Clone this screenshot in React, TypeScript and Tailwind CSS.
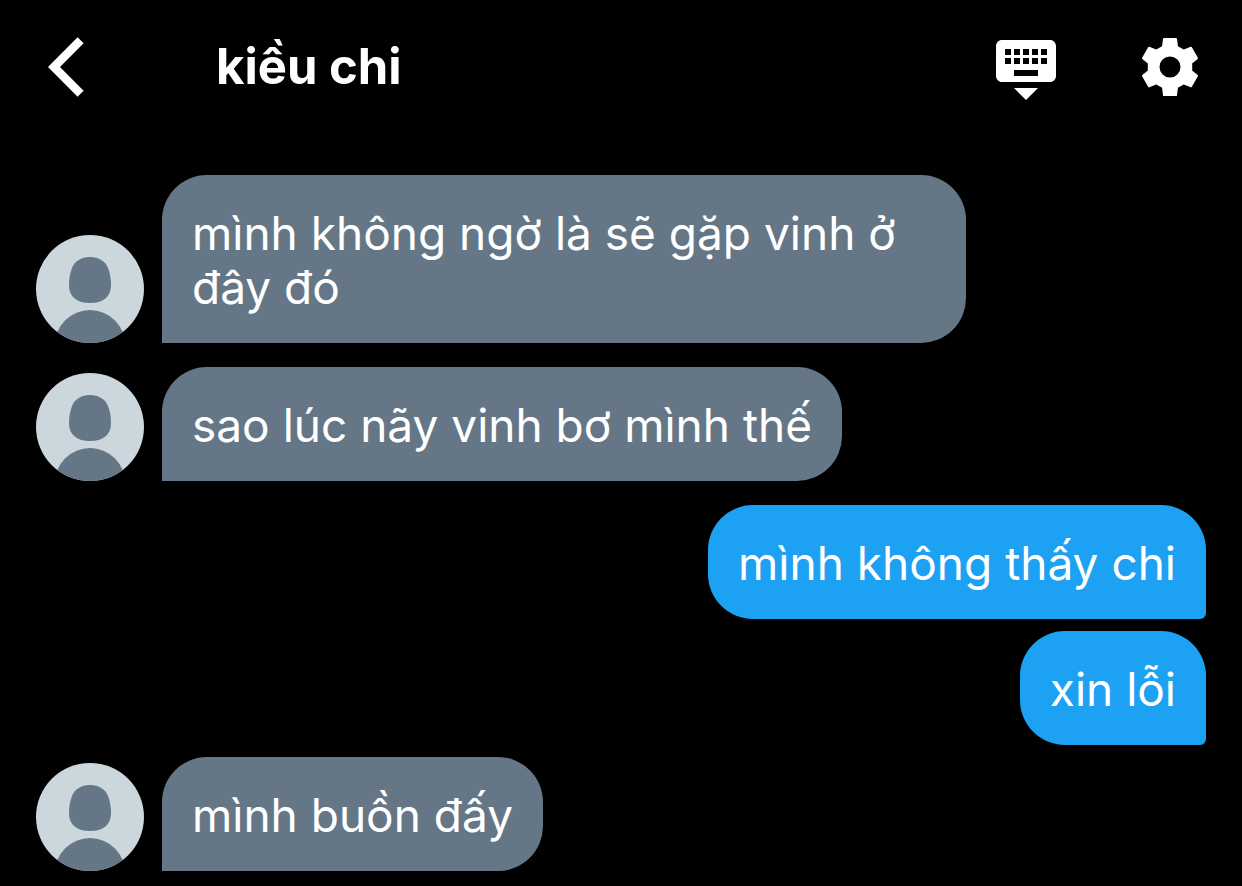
import clsx from "clsx";
import { MdKeyboardHide } from "react-icons/md";

type Message = {
  id: number;
  text: string;
  mine: boolean;
  // extra space above the bubble
  spaced: boolean;
};

const messages: Message[] = [
  { id: 1, text: "mình không ngờ là sẽ gặp vinh ở đây đó", mine: false, spaced: false },
  { id: 2, text: "sao lúc nãy vinh bơ mình thế", mine: false, spaced: true },
  { id: 3, text: "mình không thấy chi", mine: true, spaced: true },
  { id: 4, text: "xin lỗi", mine: true, spaced: false },
  { id: 5, text: "mình buồn đấy", mine: false, spaced: false },
];

function BackIcon() {
  return (
    <svg viewBox="0 0 72 72" className="size-18" fill="currentColor">
      <path d="M29.6 6.2 35.6 12.2 12 36 35.6 59.8 29.6 65.8 0 36z" />
    </svg>
  );
}

function GearIcon() {
  return (
    <svg
      viewBox="0 0 72 72"
      className="size-18"
      fill="currentColor"
      fillRule="evenodd"
      stroke="currentColor"
      strokeWidth="2"
      strokeLinejoin="round"
    >
      <path d="M30 8H42L43 15.8 49.6 19.6 57 16.8 63 27.2 57.2 32V40L63 44.8 57 55.2 49.6 52.4 43 56.2 42 64H30L29 56.2 22.4 52.4 15 55.2 9 44.8 14.8 40V32L9 27.2 15 16.8 22.4 19.6 29 15.8ZM36 24.5a11.5 11.5 0 1 0 0 23a11.5 11.5 0 1 0 0-23Z" />
    </svg>
  );
}

function Avatar() {
  return (
    <svg viewBox="0 0 108 108" className="size-27 shrink-0 rounded-full bg-[#ccd6dd]" fill="#657786">
      <path d="M54 22C63 22 69 26 72 33C74 38 75 44 75 50C75 62 67 68 54 68C41 68 33 62 33 50C33 44 34 38 36 33C39 26 45 22 54 22Z" />
      <circle cx="54" cy="110" r="35" />
    </svg>
  );
}

export default function App() {
  return (
    <div className="min-h-screen bg-black font-['Inter','Noto_Sans',sans-serif] text-white">
      <header className="flex items-center pt-[31px] pr-9 pl-12">
        <button type="button" aria-label="Back">
          <BackIcon />
        </button>
        <h1 className="ml-24 flex-1 text-[49px] leading-[60px] font-bold">kiều chi</h1>
        <div className="flex gap-18">
          <button type="button" aria-label="Hide keyboard">
            <MdKeyboardHide className="size-18" />
          </button>
          <button type="button" aria-label="Settings">
            <GearIcon />
          </button>
        </div>
      </header>

      <main className="px-9 pt-18">
        <ul className="flex flex-col gap-3">
          {messages.map((message) => (
            <li
              key={message.id}
              className={clsx(
                "flex items-end gap-[18px]",
                message.mine && "justify-end",
                message.spaced && "pt-3"
              )}
            >
              {!message.mine && <Avatar />}
              <p
                className={clsx(
                  "max-w-[804px] rounded-[45px] px-[30px] pt-[31px] pb-[29px] text-[46px] leading-[54px]",
                  message.mine ? "rounded-br-md bg-[#1da1f2]" : "rounded-bl-none bg-[#657786]"
                )}
              >
                {message.text}
              </p>
            </li>
          ))}
        </ul>
      </main>
    </div>
  );
}
